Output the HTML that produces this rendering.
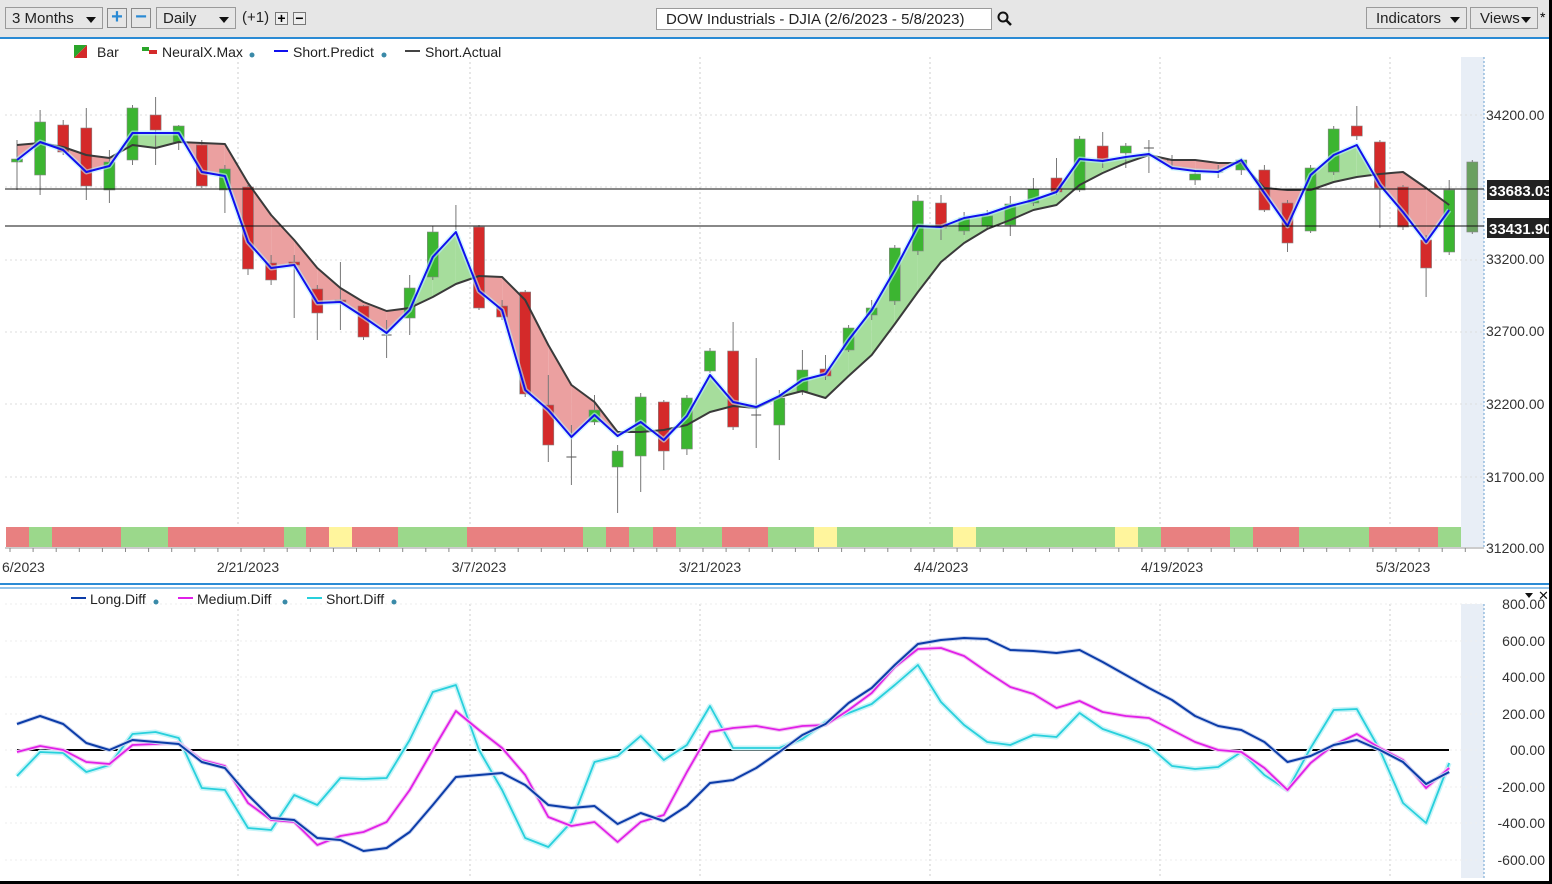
<!DOCTYPE html>
<html><head><meta charset="utf-8">
<style>
body{margin:0;width:1552px;height:884px;overflow:hidden;background:#000;font-family:"Liberation Sans",sans-serif;}
#w{position:absolute;left:0;top:0;width:1549px;height:881px;background:#fff;}
#tb{position:absolute;left:0;top:0;width:1549px;height:37px;background:#e6e6e6;border-bottom:2px solid #2a8ad4;}
.bx{position:absolute;top:7px;height:22px;border:1px solid #9a9a9a;background:#e6e6e6;font-size:15px;line-height:22px;color:#222;box-sizing:border-box;padding-left:6px}
.ar{position:absolute;right:6px;top:9px;width:0;height:0;border-left:5px solid transparent;border-right:5px solid transparent;border-top:6px solid #111}
.pm{position:absolute;top:8px;width:20px;height:20px;border:1px solid #8a8a8a;background:#e6e6e6;box-sizing:border-box;color:#2a8ad4;font-weight:bold;font-size:20px;line-height:16px;text-align:center}
.sm{position:absolute;top:12px;width:13px;height:13px;border:1px solid #777;background:#eee;box-sizing:border-box;font-size:14px;line-height:10px;text-align:center;font-weight:bold;color:#000}
svg text{font-family:"Liberation Sans",sans-serif}
</style></head><body><div id="w">
<div id="tb">
<div class="bx" style="left:5px;width:98px">3 Months<div class="ar"></div></div>
<div class="pm" style="left:107px">+</div><div class="pm" style="left:131px">−</div>
<div class="bx" style="left:156px;width:80px">Daily<div class="ar"></div></div>
<div style="position:absolute;left:242px;top:9px;font-size:15px;color:#222">(+1)</div>
<div class="sm" style="left:275px">+</div><div class="sm" style="left:293px">−</div>
<div class="bx" style="left:656px;width:336px;top:8px;background:#fff;padding-left:9px">DOW Industrials - DJIA (2/6/2023 - 5/8/2023)</div>
<svg style="position:absolute;left:997px;top:11px" width="16" height="16"><circle cx="6" cy="6" r="4.5" fill="none" stroke="#111" stroke-width="2"/><line x1="9" y1="9" x2="14" y2="14" stroke="#111" stroke-width="2.5"/></svg>
<div class="bx" style="left:1366px;width:101px;padding-left:9px">Indicators<div class="ar"></div></div>
<div class="bx" style="left:1470px;width:68px;padding-left:9px">Views<div class="ar"></div></div>
<div style="position:absolute;left:1540px;top:9px;font-size:14px">*</div>
</div>
<svg id="s" style="position:absolute;left:0;top:0" width="1549" height="881"></svg>
</div>
<script>
var S=document.getElementById('s'),h='';
var X=[];for(var i=0;i<64;i++)X.push(17+i*23.1);
// grid
h+='<rect x="1461" y="57" width="23" height="490" fill="#e8eef6"/><rect x="1461" y="604" width="23" height="274" fill="#e8eef6"/>';
[238,470,700,930,1160,1390].forEach(function(x){h+='<line x1="'+x+'" y1="57" x2="'+x+'" y2="547" stroke="#ccc" stroke-dasharray="2,3"/><line x1="'+x+'" y1="604" x2="'+x+'" y2="878" stroke="#ccc" stroke-dasharray="2,3"/>';});
[115,187,260,332,404,477].forEach(function(y){h+='<line x1="5" y1="'+y+'" x2="1484" y2="'+y+'" stroke="#ddd" stroke-dasharray="2,3"/>';});
h+='<line x1="1484" y1="57" x2="1484" y2="547" stroke="#6aa0d0" stroke-dasharray="2,2"/><line x1="1484" y1="604" x2="1484" y2="878" stroke="#6aa0d0" stroke-dasharray="2,2"/>';
var B=[160,142,150,172,166,133,133,133,172,176,242,268,265,303,302,317,333,310,257,232,291,310,390,410,437,415,436,422,440,416,375,402,407,396,380,374,340,310,270,226,227,218,214,206,200,192,159,161,157,154,168,171,172,160,193,226,175,155,145,185,212,242,210];
var A=[145,143,147,155,158,145,148,142,143,144,183,215,240,268,288,302,311,308,297,284,276,277,300,345,385,402,432,432,430,425,412,406,408,397,391,398,376,355,324,292,262,243,229,220,210,205,185,173,163,155,160,160,163,163,188,190,190,182,177,174,172,188,205];
for(var i=0;i<B.length-1;i++){
 var x0=X[i],x1=X[i+1],b0=B[i],b1=B[i+1],a0=A[i],a1=A[i+1];
 var d0=b0-a0,d1=b1-a1;
 function poly(p,c){h+='<polygon points="'+p+'" fill="'+c+'"/>';}
 function col(d){return d<0?'#a6dd9c':'#eba0a0';}
 if(d0*d1>=0){poly(x0+','+b0+' '+x1+','+b1+' '+x1+','+a1+' '+x0+','+a0,col(d0+d1));}
 else{var t=d0/(d0-d1),xm=x0+t*(x1-x0),ym=b0+t*(b1-b0);
  poly(x0+','+b0+' '+xm+','+ym+' '+x0+','+a0,col(d0));poly(xm+','+ym+' '+x1+','+b1+' '+x1+','+a1,col(d1));}
}
// candles [top,bottom,color,wtop,wbot]
var C=[[159,162,'g',140,190],[122,175,'g',110,195],[125,152,'r',120,155],[128,186,'r',108,200],[162,190,'g',150,203],[108,160,'g',105,165],[115,130,'r',97,165],[126,142,'g',125,150],[145,186,'r',140,188],[169,190,'g',165,213],[187,269,'r',185,275],[263,280,'r',255,285],[262,265,'r',255,318],[289,313,'r',285,340],[300,302,'r',262,330],[306,337,'r',305,340],[335,336,'d',320,358],[288,318,'g',275,335],[232,277,'g',226,280],[0,0,'n',205,230],[227,308,'r',225,310],[306,317,'r',300,320],[292,394,'r',290,397],[405,445,'r',375,462],[457,458,'d',425,485],[410,422,'g',395,425],[451,467,'g',445,513],[397,456,'g',393,492],[402,451,'r',400,470],[398,449,'g',395,455],[351,371,'g',348,373],[351,427,'r',322,430],[415,416,'d',358,448],[398,425,'g',390,460],[370,392,'g',350,395],[369,376,'r',355,380],[328,350,'g',325,352],[308,315,'g',300,320],[248,301,'g',245,305],[201,251,'g',195,255],[203,228,'r',195,240],[218,231,'g',212,235],[216,226,'g',210,230],[204,225,'g',196,236],[189,203,'g',178,206],[178,192,'r',158,195],[139,190,'g',136,192],[146,160,'r',132,168],[146,153,'g',143,168],[148,149,'d',140,173],[160,162,'d',155,170],[174,180,'g',170,185],[172,173,'d',165,178],[160,170,'g',158,175],[170,210,'r',165,212],[203,243,'r',200,252],[168,231,'g',165,233],[129,172,'g',126,175],[126,136,'r',106,140],[142,188,'r',140,228],[187,227,'r',185,230],[240,268,'r',235,297],[190,252,'g',180,255],[162,232,'x',160,234]];
C.forEach(function(c,i){var x=X[i];
 h+='<line x1="'+x+'" y1="'+c[3]+'" x2="'+x+'" y2="'+c[4]+'" stroke="#777" stroke-width="1"/>';
 if(c[2]=='n')return;
 if(c[2]=='d'){h+='<line x1="'+(x-5)+'" y1="'+c[0]+'" x2="'+(x+5)+'" y2="'+c[0]+'" stroke="#555"/>';return;}
 var f=c[2]=='g'?'#3cb531':c[2]=='r'?'#d42a2a':'#6aa060';
 h+='<rect x="'+(x-5.5)+'" y="'+c[0]+'" width="11" height="'+(c[1]-c[0])+'" fill="'+f+'" stroke="#888" stroke-width="0.6"/>';
});
function pl(Y,c,w,extra){var p=[];for(var i=0;i<Y.length;i++)p.push(X[i].toFixed(1)+','+Y[i]);return '<polyline points="'+p.join(' ')+'" fill="none" stroke="'+c+'" stroke-width="'+w+'" stroke-linejoin="round" '+(extra||'')+'/>';}
h+=pl(A,'#3a3a3a',2);
h+=pl(B,'#b8f0ff',5,'opacity="0.6"')+pl(B,'#1010ee',2);
h+='<line x1="5" y1="189" x2="1484" y2="189" stroke="#111"/><line x1="5" y1="226" x2="1484" y2="226" stroke="#111"/>';
// band
var band=[[6,29,'r'],[29,52,'g'],[52,121,'r'],[121,168,'g'],[168,284,'r'],[284,306,'g'],[306,329,'r'],[329,352,'y'],[352,398,'r'],[398,467,'g'],[467,583,'r'],[583,606,'g'],[606,629,'r'],[629,653,'g'],[653,676,'r'],[676,722,'g'],[722,768,'r'],[768,814,'g'],[814,837,'y'],[837,953,'g'],[953,976,'y'],[976,1115,'g'],[1115,1138,'y'],[1138,1161,'g'],[1161,1230,'r'],[1230,1253,'g'],[1253,1299,'r'],[1299,1369,'g'],[1369,1438,'r'],[1438,1461,'g']];
band.forEach(function(b){h+='<rect x="'+b[0]+'" y="527" width="'+(b[1]-b[0])+'" height="20" fill="'+(b[2]=='r'?'#e88080':b[2]=='g'?'#9bd88b':'#fff59d')+'"/>';});
h+='<line x1="5" y1="548" x2="1484" y2="548" stroke="#999"/>';
for(var x=10;x<1484;x+=23.1)h+='<line x1="'+x+'" y1="548" x2="'+x+'" y2="552" stroke="#888"/>';
// axis labels
[[115,'34200.00'],[259,'33200.00'],[331,'32700.00'],[404,'32200.00'],[477,'31700.00'],[548,'31200.00']].forEach(function(l){h+='<text x="1486" y="'+(l[0]+5)+'" font-size="14" fill="#333">'+l[1]+'</text>';});
h+='<rect x="1487" y="180" width="62" height="20" fill="#222"/><text x="1489" y="196" font-size="15" font-weight="bold" fill="#fff">33683.03</text>';
h+='<rect x="1487" y="218" width="62" height="20" fill="#222"/><text x="1489" y="234" font-size="15" font-weight="bold" fill="#fff">33431.90</text>';
[[2,'6/2023','start'],[248,'2/21/2023','middle'],[479,'3/7/2023','middle'],[710,'3/21/2023','middle'],[941,'4/4/2023','middle'],[1172,'4/19/2023','middle'],[1403,'5/3/2023','middle']].forEach(function(l){h+='<text x="'+l[0]+'" y="572" font-size="14" fill="#333" text-anchor="'+l[2]+'">'+l[1]+'</text>';});
h+='<line x1="0" y1="584" x2="1549" y2="584" stroke="#2a8ad4" stroke-width="2"/><line x1="0" y1="588" x2="1549" y2="588" stroke="#2a8ad4"/>';
// legend top
h+='<polygon points="74,45 87,45 74,58" fill="#2aa52a"/><polygon points="87,45 87,58 74,58" fill="#d42a2a"/><text x="97" y="57" font-size="14" fill="#222">Bar</text>';
h+='<rect x="142" y="47" width="7" height="4" fill="#2aa52a"/><rect x="149" y="50" width="8" height="4" fill="#d42a2a"/><text x="162" y="57" font-size="14" fill="#222">NeuralX.Max</text><circle cx="252" cy="55" r="2.5" fill="#3a8aa8"/>';
h+='<line x1="274" y1="51" x2="288" y2="51" stroke="#1010ee" stroke-width="2"/><text x="293" y="57" font-size="14" fill="#222">Short.Predict</text><circle cx="384" cy="55" r="2.5" fill="#3a8aa8"/>';
h+='<line x1="405" y1="51" x2="420" y2="51" stroke="#444" stroke-width="2"/><text x="425" y="57" font-size="14" fill="#222">Short.Actual</text>';
// lower panel
[604,641,677,714,750,787,823,860].forEach(function(y){h+='<line x1="5" y1="'+y+'" x2="1484" y2="'+y+'" stroke="#eee" stroke-dasharray="2,3"/>';});
[[604,'800.00'],[641,'600.00'],[677,'400.00'],[714,'200.00'],[750,'00.00'],[787,'-200.00'],[823,'-400.00'],[860,'-600.00']].forEach(function(l){h+='<text x="1545" y="'+(l[0]+5)+'" font-size="14" fill="#333" text-anchor="end">'+l[1]+'</text>';});
h+='<line x1="17" y1="750" x2="1449" y2="750" stroke="#000" stroke-width="2"/>';
var L=[724,716,724,743,750,740,742,744,762,768,795,818,820,838,840,851,848,832,805,777,775,773,785,805,808,806,824,813,821,806,783,780,768,752,735,724,703,688,665,644,640,638,639,650,651,653,650,662,675,688,700,716,726,730,742,762,756,745,740,750,762,784,772];
var M=[752,746,750,762,764,745,744,743,760,766,803,820,822,845,836,832,822,790,750,711,730,748,775,817,826,822,842,822,815,772,732,728,726,730,726,725,710,693,667,649,648,656,672,687,694,708,701,712,716,718,730,742,750,752,768,790,763,745,734,748,760,788,768];
var Sh=[776,752,753,772,765,734,732,738,788,790,828,830,795,805,778,779,778,740,692,685,750,790,838,847,822,762,756,736,760,745,706,748,748,748,739,722,713,704,685,665,702,725,742,745,735,737,713,729,737,746,766,769,767,752,775,790,748,710,709,750,803,823,763];
h+=pl(Sh,'#c8f4f8',5)+pl(Sh,'#28d0dc',1.8);
h+=pl(M,'#f4c8f4',4)+pl(M,'#e020e8',1.8);
h+=pl(L,'#c8d4f0',4)+pl(L,'#0c3ca8',2);
h+='<line x1="71" y1="598" x2="86" y2="598" stroke="#0c3ca8" stroke-width="2"/><text x="90" y="604" font-size="14" fill="#222">Long.Diff</text><circle cx="156" cy="602" r="2.5" fill="#3a8aa8"/>';
h+='<line x1="178" y1="598" x2="193" y2="598" stroke="#e020e8" stroke-width="2"/><text x="197" y="604" font-size="14" fill="#222">Medium.Diff</text><circle cx="285" cy="602" r="2.5" fill="#3a8aa8"/>';
h+='<line x1="307" y1="598" x2="322" y2="598" stroke="#28d0dc" stroke-width="2"/><text x="326" y="604" font-size="14" fill="#222">Short.Diff</text><circle cx="394" cy="602" r="2.5" fill="#3a8aa8"/>';
h+='<polygon points="1525,593 1533,593 1529,598" fill="#111"/><text x="1538" y="600" font-size="13" fill="#111">✕</text>';
S.innerHTML=h;
</script>
</body></html>
